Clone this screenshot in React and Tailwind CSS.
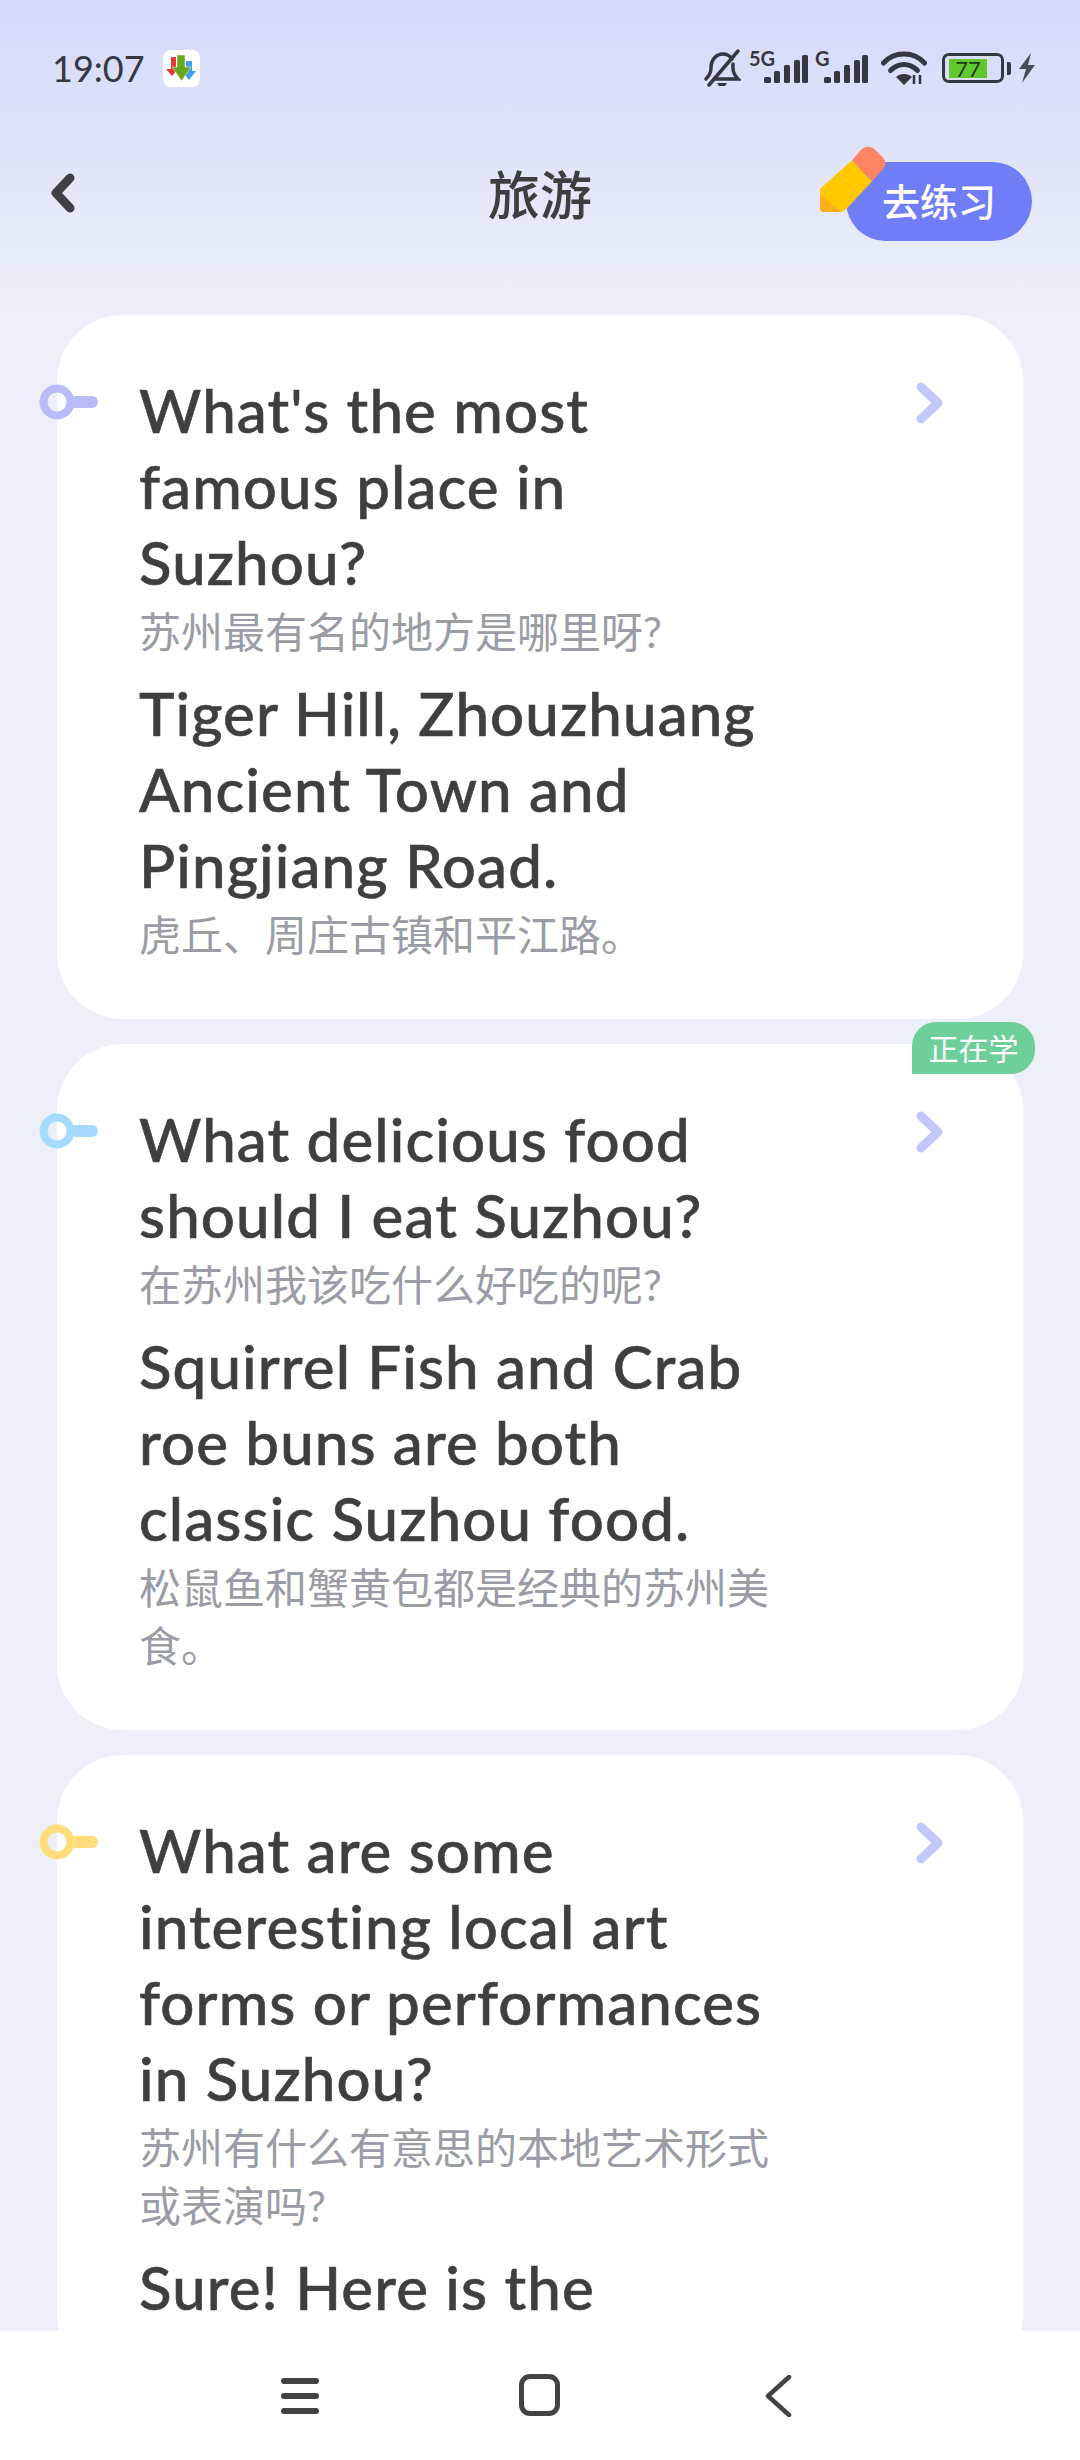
const cards = [
  {
    en: "What's the most famous place in Suzhou?",
    zh: "苏州最有名的地方是哪里呀?",
    answerEn: "Tiger Hill, Zhouzhuang Ancient Town and Pingjiang Road.",
    answerZh: "虎丘、周庄古镇和平江路。",
    keyColor: "#b9bcf9",
  },
  {
    en: "What delicious food should I eat Suzhou?",
    zh: "在苏州我该吃什么好吃的呢?",
    answerEn: "Squirrel Fish and Crab roe buns are both classic Suzhou food.",
    answerZh: "松鼠鱼和蟹黄包都是经典的苏州美食。",
    keyColor: "#a6dbff",
    learning: true,
  },
  {
    en: "What are some interesting local art forms or performances in Suzhou?",
    zh: "苏州有什么有意思的本地艺术形式或表演吗?",
    answerEn: "Sure! Here is the",
    keyColor: "#ffdd7a",
  },
];

const Signal = () => (
  <svg width="44" height="28" viewBox="0 0 44 28" className="block">
    <rect x="0" y="22" width="7" height="6" rx="1.5" fill="#353842" />
    <rect x="10" y="16" width="6" height="12" rx="1.5" fill="#353842" />
    <rect x="20" y="10" width="6" height="18" rx="1.5" fill="#353842" />
    <rect x="30" y="5" width="6" height="23" rx="1.5" fill="#353842" />
    <rect x="38" y="0" width="6" height="28" rx="1.5" fill="#353842" />
  </svg>
);

const StatusBar = () => (
  <div className="flex h-[90px] items-end justify-between pb-[7px] pl-[52px] pr-[44px]">
    <div className="mb-[-3px] flex h-[36px] items-center gap-[18px]">
      <span className="text-[36px] leading-[40px] text-[#353842]">19:07</span>
      <svg width="37" height="37" viewBox="0 0 37 37" className="block">
        <rect width="37" height="37" rx="8" fill="#ffffff" />
        <path d="M8 7h5v12h2l-6 7-6-7h5z" fill="#e53935" />
        <path d="M23 11h6v10h4l-7 9-7-9h4z" fill="#3f9ff0" />
        <path d="M14 5h8v12h6l-9.500 14L9 17h5z" fill="#6aa81e" stroke="#ffffff" strokeWidth="0.500" />
      </svg>
    </div>
    <div className="flex items-end">
      <svg width="38" height="38" viewBox="0 0 38 38" className="mb-[-4px] block">
        <path d="M3 30c3-3 5-6 5-11 0-8 5-14 12-14 4 0 7 2 9 5M30 15c0 1 0 2 0 4 0 5 2 8 5 11H11" fill="none" stroke="#353842" strokeWidth="3.500" strokeLinecap="round" />
        <path d="M6 36L35 2" stroke="#353842" strokeWidth="3.500" strokeLinecap="round" />
        <path d="M14 34h10l-2 3h-6z" fill="#353842" />
      </svg>
      <div className="relative ml-[23px] h-[34px] w-[44px]">
        <span className="absolute left-[-15px] top-[-1px] text-[20px] font-bold leading-[20px] text-[#353842]">5G</span>
        <div className="absolute bottom-0 left-0"><Signal /></div>
      </div>
      <div className="relative ml-[16px] h-[34px] w-[44px]">
        <span className="absolute left-[-9px] top-[-1px] text-[20px] font-bold leading-[20px] text-[#353842]">G</span>
        <div className="absolute bottom-0 left-0"><Signal /></div>
      </div>
      <svg width="46" height="36" viewBox="0 0 46 36" className="mb-[-3px] ml-[13px] block">
        <path d="M2.500 13C13 1 33 1 43.500 13" fill="none" stroke="#353842" strokeWidth="5" strokeLinecap="round" />
        <path d="M9.500 20.500c8-8 19-8 27 0" fill="none" stroke="#353842" strokeWidth="5" strokeLinecap="round" />
        <path d="M15 27c4-4 12-4 16 0l-8 8z" fill="#353842" />
        <path d="M33 25v9M39 25v9" stroke="#353842" strokeWidth="2.500" />
      </svg>
      <div className="ml-[15px] flex items-center">
        <div className="box-border flex h-[30px] w-[62px] items-center rounded-[7px] border-[3px] border-[#353842] pl-[4px]">
          <div className="flex h-[19px] w-[38px] items-center justify-center bg-[#60c82c] text-[22px] leading-[19px] text-[#1c3a10]">77</div>
        </div>
        <div className="ml-[3px] h-[13px] w-[4px] rounded-r-[2px] bg-[#353842]" />
      </div>
      <svg width="18" height="30" viewBox="0 0 18 30" className="ml-[7px] block">
        <path d="M13 0L1 16l7 0-4 14L17 12l-7 0z" fill="#4a4d57" />
      </svg>
    </div>
  </div>
);

const Header = () => (
  <div className="relative flex h-[159px] items-center justify-center pt-[51px]">
    <svg width="26" height="42" viewBox="0 0 26 42" className="absolute left-[50px] top-[82px] block">
      <path d="M20 6L6 21l14 15" fill="none" stroke="#3f4145" strokeWidth="9" strokeLinecap="round" strokeLinejoin="round" />
    </svg>
    <h1 className="text-[52px] font-medium leading-[60px] text-[#3c3e40]">旅游</h1>
    <button className="absolute left-[846px] top-[72px] flex h-[79px] w-[186px] items-center justify-center rounded-full bg-[#6f7df7] pb-[2px] text-[38px] font-medium leading-[44px] text-white">
      <span>去练习</span>
    </button>
    <svg width="66" height="67" viewBox="0 0 66 70" preserveAspectRatio="none" className="absolute left-[820px] top-[56px] block">
      <path d="M0 45L32 15l20 22-27 30q-2 2-5 2H4q-4 0-4-4z" fill="#ffc800" />
      <path d="M0 50l20 19H4q-4 0-4-4z" fill="#ffae1c" />
      <path d="M32 15L41 4q6-6 13-1l9 9q5 6 0 12L52 37z" fill="#ff8562" />
    </svg>
  </div>
);

const Card = ({ card }) => (
  <div className="relative rounded-[66px] bg-white pb-[55px] pl-[82px] pr-[244px] pt-[57px]">
    {/* key marker hangs over the card's left edge */}
    <svg width="59" height="36" viewBox="0 0 59 36" className="absolute left-[-18px] top-[69px] block">
      <circle cx="18" cy="18" r="13.500" fill="none" stroke={card.keyColor} strokeWidth="8" />
      <rect x="30" y="12" width="29" height="12" rx="6" fill={card.keyColor} />
    </svg>
    <svg width="27" height="42" viewBox="0 0 27 42" className="absolute left-[859px] top-[67px] block">
      <path d="M5 5l17 16L5 37" fill="none" stroke="#c3c6fb" strokeWidth="9" strokeLinecap="round" strokeLinejoin="round" />
    </svg>
    {card.learning && (
      <div className="absolute left-[855px] top-[-22px] flex h-[52px] w-[123px] items-center justify-center rounded-t-[24px] rounded-br-[24px] bg-[#6fcf9b] text-[30px] leading-[40px] text-white">
        正在学
      </div>
    )}
    <p className="text-[60px] font-medium leading-[76px] tracking-[1.1px] text-[#3f3f3f] [-webkit-text-stroke:0.6px_#3f3f3f]">{card.en}</p>
    <p className="mt-[3px] text-[42px] leading-[58px] text-[#9a9ca6]">{card.zh}</p>
    <p className="mt-[14px] text-[60px] font-medium leading-[76px] tracking-[1.1px] text-[#3f3f3f] [-webkit-text-stroke:0.6px_#3f3f3f]">{card.answerEn}</p>
    {card.answerZh && <p className="mt-[3px] text-[42px] leading-[58px] text-[#9a9ca6]">{card.answerZh}</p>}
  </div>
);

const NavBar = () => (
  <div className="relative h-[129px] shrink-0 bg-white">
    <div className="absolute left-[281px] top-[47px] flex flex-col gap-[9px]">
      <div className="h-[6px] w-[38px] rounded-full bg-[#434343]" />
      <div className="h-[6px] w-[38px] rounded-full bg-[#434343]" />
      <div className="h-[6px] w-[38px] rounded-full bg-[#434343]" />
    </div>
    <div className="absolute left-[519px] top-[43px] h-[42px] w-[41px] rounded-[11px] border-[5px] border-[#434343]" />
    <svg width="28" height="42" viewBox="0 0 28 42" className="absolute left-[764px] top-[44px] block">
      <path d="M25 2L4 21l21 19" fill="none" stroke="#434343" strokeWidth="4.500" strokeLinecap="round" strokeLinejoin="round" />
    </svg>
  </div>
);

export default function App() {
  return (
    <div className="flex h-[2460px] w-[1080px] flex-col overflow-hidden bg-[#edf0f9] font-['Lato','Noto_Sans_CJK_SC',sans-serif]">
      <div className="flex h-[315px] shrink-0 flex-col bg-gradient-to-b from-[#d5d9f8] to-[#edf0f9]">
        <StatusBar />
        <Header />
      </div>
      <div className="flex min-h-0 flex-1 flex-col gap-[25px] overflow-hidden pl-[57px] pr-[57px]">
        {cards.map((card, i) => (
          <Card key={i} card={card} />
        ))}
      </div>
      <NavBar />
    </div>
  );
}
